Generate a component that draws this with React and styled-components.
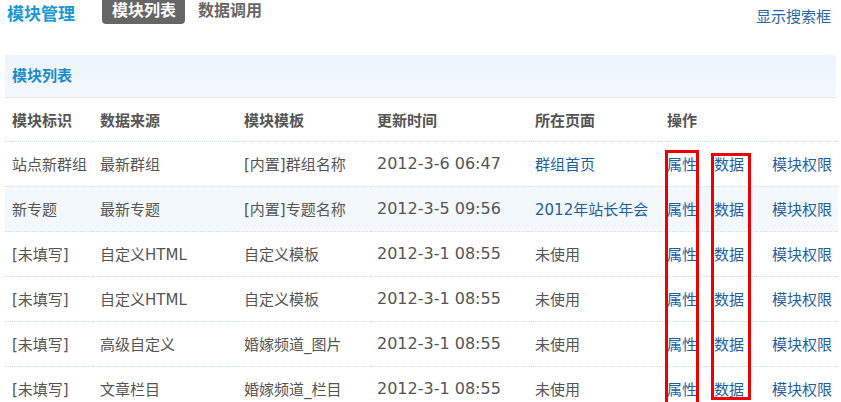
import React from 'react';
import styled, { createGlobalStyle } from 'styled-components';

const GlobalStyle = createGlobalStyle`
  html, body {
    margin: 0;
    padding: 0;
    background: #fff;
    overflow: hidden;
  }
  body {
    font-family: "DejaVu Sans", "Noto Sans CJK SC", sans-serif;
    font-size: 15px;
    color: #555;
  }
`;

const Page = styled.div`
  position: relative;
  padding: 0 5px;
  width: 841px;
  box-sizing: border-box;
`;

const TopBar = styled.div`
  display: flex;
  align-items: center;
  height: 26px;
  margin-bottom: 29px;
`;

const Title = styled.h2`
  margin: 0 0 2px 2px;
  font-size: 17px;
  font-weight: bold;
  color: #1899d5;
  width: 95px;
`;

const Tab = styled.span`
  display: inline-block;
  height: 24px;
  line-height: 22px;
  padding: 0 9px 0 10px;
  margin-right: 3px;
  align-self: flex-start;
  border-radius: 0 0 4px 4px;
  font-size: 16px;
  font-weight: bold;
  background: ${({ active }) => (active ? '#666' : 'transparent')};
  color: ${({ active }) => (active ? '#fff' : '#666')};
`;

const SearchToggle = styled.a`
  margin-left: auto;
  margin-right: 5px;
  margin-top: 4px;
  font-size: 15px;
  color: #2767a6;
  text-decoration: none;
`;

const PanelHead = styled.div`
  height: 42px;
  line-height: 42px;
  padding-left: 7px;
  background: linear-gradient(#edf4fd, #f2f8fd);
  border-bottom: 1px dotted #cfe0ee;
  font-size: 15px;
  font-weight: bold;
  color: #1a8dc8;
`;

const Table = styled.table`
  width: 833px;
  border-collapse: collapse;
  table-layout: fixed;
`;

const Row = styled.tr`
  height: ${({ head }) => (head ? '43px' : '45px')};
  background: ${({ shaded }) => (shaded ? '#f2f8fc' : '#fff')};
  border-bottom: 1px dotted #cfe0ee;
`;

const HeadCell = styled.th`
  text-align: left;
  padding: 0 0 0 7px;
  font-weight: bold;
  font-size: 15px;
  color: #555;
  white-space: nowrap;
`;

const Cell = styled.td`
  padding: 0 0 0 7px;
  white-space: nowrap;
  font-size: ${({ date }) => (date ? '16px' : '15px')};
  color: #555;
`;

const Link = styled.a`
  color: #1f5fa0;
  text-decoration: none;
`;

const Mark = styled.div`
  position: absolute;
  border: 3px solid #ee0000;
  box-sizing: border-box;
  pointer-events: none;
`;

const widths = [88, 144, 133, 158, 132, 47, 58, 73];
const heads = ['模块标识', '数据来源', '模块模板', '更新时间', '所在页面', '操作', '', ''];

const rows = [
  ['站点新群组', '最新群组', '[内置]群组名称', '2012-3-6 06:47', '群组首页', true],
  ['新专题', '最新专题', '[内置]专题名称', '2012-3-5 09:56', '2012年站长年会', true],
  ['[未填写]', '自定义HTML', '自定义模板', '2012-3-1 08:55', '未使用', false],
  ['[未填写]', '自定义HTML', '自定义模板', '2012-3-1 08:55', '未使用', false],
  ['[未填写]', '高级自定义', '婚嫁频道_图片', '2012-3-1 08:55', '未使用', false],
  ['[未填写]', '文章栏目', '婚嫁频道_栏目', '2012-3-1 08:55', '未使用', false],
];

export default function App() {
  return (
    <Page>
      <GlobalStyle />
      <TopBar>
        <Title>模块管理</Title>
        <Tab active>模块列表</Tab>
        <Tab>数据调用</Tab>
        <SearchToggle href="#">显示搜索框</SearchToggle>
      </TopBar>
      <PanelHead>模块列表</PanelHead>
      <Table>
        <colgroup>
          {widths.map((w, i) => (
            <col key={i} style={{ width: w }} />
          ))}
        </colgroup>
        <thead>
          <Row head>
            {heads.map((h, i) => (
              <HeadCell key={i}>{h}</HeadCell>
            ))}
          </Row>
        </thead>
        <tbody>
          {rows.map(([id, src, tpl, time, page, linked], i) => (
            <Row key={i} shaded={i === 1}>
              <Cell>{id}</Cell>
              <Cell>{src}</Cell>
              <Cell>{tpl}</Cell>
              <Cell date>{time}</Cell>
              <Cell>{linked ? <Link href="#">{page}</Link> : page}</Cell>
              <Cell><Link href="#">属性</Link></Cell>
              <Cell><Link href="#">数据</Link></Cell>
              <Cell><Link href="#">模块权限</Link></Cell>
            </Row>
          ))}
        </tbody>
      </Table>
      <Mark style={{ left: 665, top: 150, width: 34, height: 260 }} />
      <Mark style={{ left: 711, top: 153, width: 40, height: 247 }} />
    </Page>
  );
}
